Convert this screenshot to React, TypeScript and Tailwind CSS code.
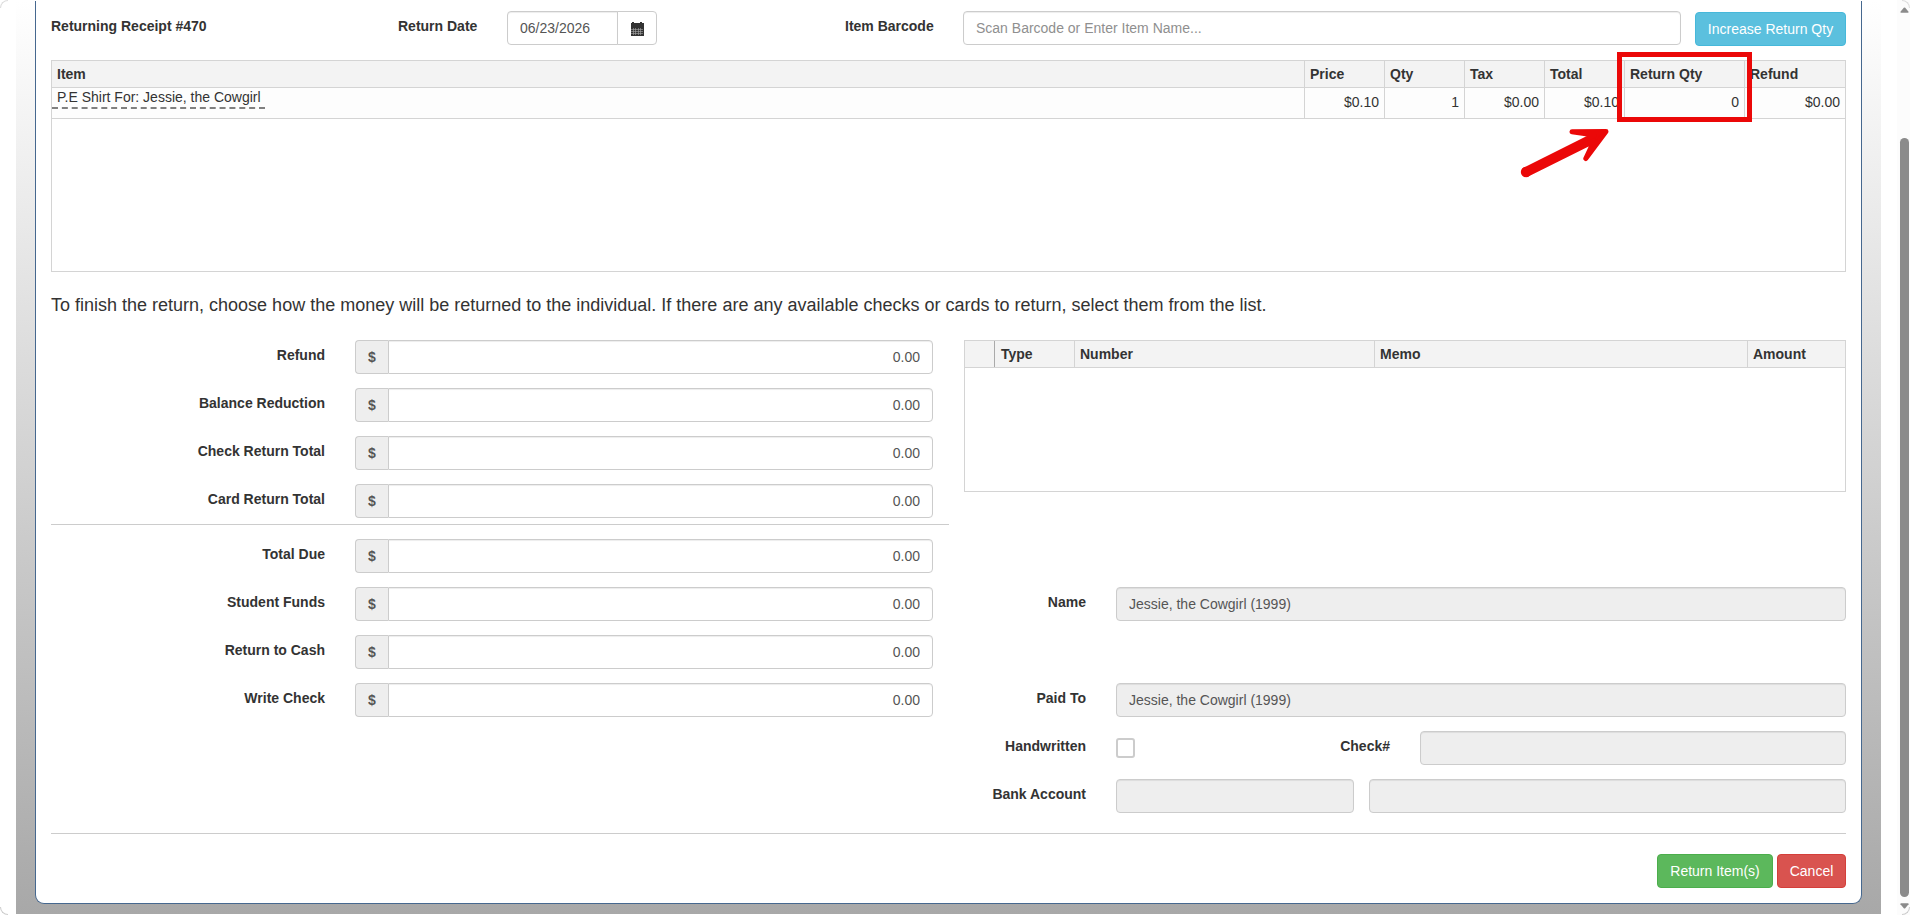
import { useState } from 'react';
import type { ReactNode } from 'react';
import { clsx } from 'clsx';

const receiptItems = [
    { name: 'P.E Shirt For: Jessie, the Cowgirl', price: '$0.10', qty: '1', tax: '$0.00', total: '$0.10', returnQty: '0', refund: '$0.00' },
];

const returnTotals = ['Refund', 'Balance Reduction', 'Check Return Total', 'Card Return Total'];
const payoutTotals = ['Total Due', 'Student Funds', 'Return to Cash', 'Write Check'];

const itemGrid = 'grid grid-cols-[1252px_80px_80px_80px_80px_120px_101px]';
const fieldBase = 'h-[34px] rounded-[4px] border border-[#ccc] px-3 text-sm text-[#555] shadow-[inset_0_1px_1px_rgba(0,0,0,0.075)] outline-none';

function FieldLabel({ className, children }: { className?: string; children: ReactNode }) {
    return <label className={clsx('shrink-0 pt-[5px] font-bold', className)}>{children}</label>;
}

function MoneyRow({ label }: { label: string }) {
    const [value, setValue] = useState('0.00');

    return (
        <div className="flex h-[34px]">
            <FieldLabel className="mr-[30px] w-[274px] text-right">{label}</FieldLabel>
            <span className="flex w-[33px] items-center justify-center rounded-l-[4px] border border-r-0 border-[#ccc] bg-[#eee] font-bold text-[#555]">$</span>
            <input
                value={value}
                onChange={e => setValue(e.target.value)}
                className={clsx(fieldBase, 'w-[545px] rounded-l-none bg-white text-right')}
            />
        </div>
    );
}

function DisabledField({ value = '', className }: { value?: string; className: string }) {
    return <input value={value} disabled className={clsx(fieldBase, 'bg-[#eee]', className)} />;
}

function CalendarIcon() {
    return (
        <svg width="14" height="14" viewBox="0 0 14 14" shapeRendering="crispEdges">
            <path fill="#333" d="M2 0h2v1h6V0h2v1h1.500v3.500h-13V1H2z" />
            <path fill="#333" d="M.5 5h13v9H.5z" />
            <path stroke="#a5a5a5" strokeWidth=".6" d="M1 7.500h12M1 9.500h12M1 11.500h12M3.500 6v7M5.500 6v7M8.500 6v7M10.500 6v7" />
        </svg>
    );
}

function ItemsTable() {
    return (
        <div className="relative mt-[15px] h-[212px] border border-[#d4d4d4]">
            <div className={clsx(itemGrid, 'h-[27px] border-b border-[#d4d4d4] bg-[#f3f3f3] font-bold')}>
                {['Item', 'Price', 'Qty', 'Tax', 'Total', 'Return Qty', 'Refund'].map((name, i) => (
                    <div key={name} className={clsx('pt-[3px] pl-[5px]', i > 0 && 'border-l border-[#d4d4d4]')}>{name}</div>
                ))}
            </div>
            {receiptItems.map(item => (
                <div key={item.name} className={clsx(itemGrid, 'h-[31px] border-b border-[#d4d4d4] bg-[#fdfdfd]')}>
                    <div>
                        <span className="block h-[21px] w-[213px] border-b-2 border-dashed border-[#808080] pl-[5px] leading-[18px] whitespace-nowrap">{item.name}</span>
                    </div>
                    {[item.price, item.qty, item.tax, item.total, item.returnQty, item.refund].map((cell, i) => (
                        <div key={i} className="border-l border-[#d4d4d4] pt-1 pr-[5px] text-right">{cell}</div>
                    ))}
                </div>
            ))}

            {/* Callout on the Return Qty column */}
            <div className="absolute -top-[9px] left-[1565px] h-[70px] w-[135px] border-[5px] border-[#eb0808]" />
            <svg className="absolute top-[54px] left-[1463px]" width="100" height="70" viewBox="0 0 100 70">
                <circle cx="11" cy="57" r="5.200" fill="#eb0808" />
                <path
                    fill="#eb0808"
                    stroke="#eb0808"
                    strokeWidth="5"
                    strokeLinejoin="round"
                    d="M57 16.800 91 16.500 70.800 43.500 79 26 12.200 59.200 9.800 54.800 79.500 20z"
                />
            </svg>
        </div>
    );
}

function ChecksTable() {
    return (
        <div className="h-[152px] border border-[#d4d4d4]">
            <div className="grid h-[27px] grid-cols-[29px_80px_300px_373px_98px] border-b border-[#d4d4d4] bg-[#f3f3f3] font-bold">
                <div />
                <div className="border-l border-[#aaa] pt-[3px] pl-[6px]">Type</div>
                {['Number', 'Memo', 'Amount'].map(name => (
                    <div key={name} className="border-l border-[#d4d4d4] pt-[3px] pl-[5px]">{name}</div>
                ))}
            </div>
        </div>
    );
}

function Scrollbar() {
    return (
        <div className="flex w-[13px] flex-col items-end bg-[#fcfcfc] pt-[7px] pr-px pb-[5px]">
            <svg width="9" height="6" viewBox="0 0 10 6"><path fill="#8b8b8b" d="M4.200.500Q5-.3 5.800.500L9.500 5q.3 1-.7 1H1.200Q.200 6 .5 5z" /></svg>
            <div className="mt-[125px] h-[759px] w-[9px] rounded-full bg-[#8b8b8b]" />
            <svg className="mt-[6px]" width="9" height="6" viewBox="0 0 10 6"><path fill="#8b8b8b" d="M4.200 5.500Q5 6.300 5.800 5.500L9.500 1q.3-1-.7-1H1.200Q.200 0 .5 1z" /></svg>
        </div>
    );
}

export default function App() {
    const [date, setDate] = useState('06/23/2026');
    const [barcode, setBarcode] = useState('');

    return (
        <div className="relative flex h-[915px] w-[1910px] justify-between overflow-hidden bg-white pl-4 font-['Liberation_Sans',Arial,sans-serif] text-sm leading-5 text-[#333]">
            <div className="mt-px h-[913px] w-[1865px] bg-linear-to-b from-white to-[#a8a8a8] px-[19px]">
                <div className="h-[903px] rounded-b-[9px] border border-t-0 border-[#46688f] bg-white px-[15px] pt-[10px]">
                    <div className="flex h-[34px]">
                        <FieldLabel className="w-[347px]">Returning Receipt #470</FieldLabel>
                        <FieldLabel className="w-[109px]">Return Date</FieldLabel>
                        <input
                            value={date}
                            onChange={e => setDate(e.target.value)}
                            className={clsx(fieldBase, 'w-[111px] rounded-r-none')}
                        />
                        <button className="-ml-px flex w-10 items-center justify-center rounded-r-[4px] border border-[#ccc] bg-white pt-px pr-px">
                            <CalendarIcon />
                        </button>
                        <FieldLabel className="ml-[188px] w-[118px]">Item Barcode</FieldLabel>
                        <input
                            value={barcode}
                            onChange={e => setBarcode(e.target.value)}
                            placeholder="Scan Barcode or Enter Item Name..."
                            className={clsx(fieldBase, 'w-[718px] placeholder:text-[#8f8f8f]')}
                        />
                        <button className="mt-px ml-[14px] h-[34px] w-[151px] shrink-0 rounded-[4px] border border-[#46b8da] bg-[#5bc0de] text-white">
                            Increase Return Qty
                        </button>
                    </div>

                    <ItemsTable />

                    <p className="mt-[20px] text-lg leading-[26px]">
                        To finish the return, choose how the money will be returned to the individual. If there are any available checks or cards to return, select them from the list.
                    </p>

                    <div className="mt-[22px] flex h-[473px] gap-[15px]">
                        <div className="w-[898px]">
                            <div className="flex flex-col gap-[14px] border-b border-[#ccc] pb-[6px]">
                                {returnTotals.map(label => <MoneyRow key={label} label={label} />)}
                            </div>
                            <div className="mt-[14px] flex flex-col gap-[14px]">
                                {payoutTotals.map(label => <MoneyRow key={label} label={label} />)}
                            </div>
                        </div>

                        <div className="w-[882px]">
                            <ChecksTable />
                            <div className="mt-[95px] flex">
                                <FieldLabel className="mr-[30px] w-[122px] text-right">Name</FieldLabel>
                                <DisabledField value="Jessie, the Cowgirl (1999)" className="w-[730px]" />
                            </div>
                            <div className="mt-[62px] flex">
                                <FieldLabel className="mr-[30px] w-[122px] text-right">Paid To</FieldLabel>
                                <DisabledField value="Jessie, the Cowgirl (1999)" className="w-[730px]" />
                            </div>
                            <div className="mt-[14px] flex">
                                <FieldLabel className="mr-[30px] w-[122px] text-right">Handwritten</FieldLabel>
                                <input type="checkbox" className="mt-[7px] h-5 w-[19px] appearance-none rounded-[3px] border-2 border-[#ccc] bg-white" />
                                <FieldLabel className="mr-[30px] w-[255px] text-right">Check#</FieldLabel>
                                <DisabledField className="w-[426px]" />
                            </div>
                            <div className="mt-[14px] flex">
                                <FieldLabel className="mr-[30px] w-[122px] text-right">Bank Account</FieldLabel>
                                <DisabledField className="w-[238px]" />
                                <DisabledField className="ml-[15px] w-[477px]" />
                            </div>
                        </div>
                    </div>

                    <div className="mt-[20px] flex justify-end gap-1 border-t border-[#ccc] pt-[20px] text-white">
                        <button className="h-[34px] w-[116px] rounded-[4px] border border-[#4cae4c] bg-[#5cb85c]">Return Item(s)</button>
                        <button className="h-[34px] w-[69px] rounded-[4px] border border-[#d43f3a] bg-[#d9534f]">Cancel</button>
                    </div>
                </div>
            </div>

            <Scrollbar />

            {/* Rounded window corners */}
            <div className="absolute top-0 left-0 size-2 rounded-tl-[8px] border-t border-l border-[#ddd]" />
            <div className="absolute bottom-0 left-0 size-2 rounded-bl-[8px] border-b border-l border-[#ccc]" />
            <div className="absolute right-0 bottom-0 size-2 rounded-br-[8px] border-r border-b border-[#ccc]" />
            <div className="absolute top-0 right-0 size-2 rounded-tr-[8px] border-t border-r border-[#ddd]" />
        </div>
    );
}
